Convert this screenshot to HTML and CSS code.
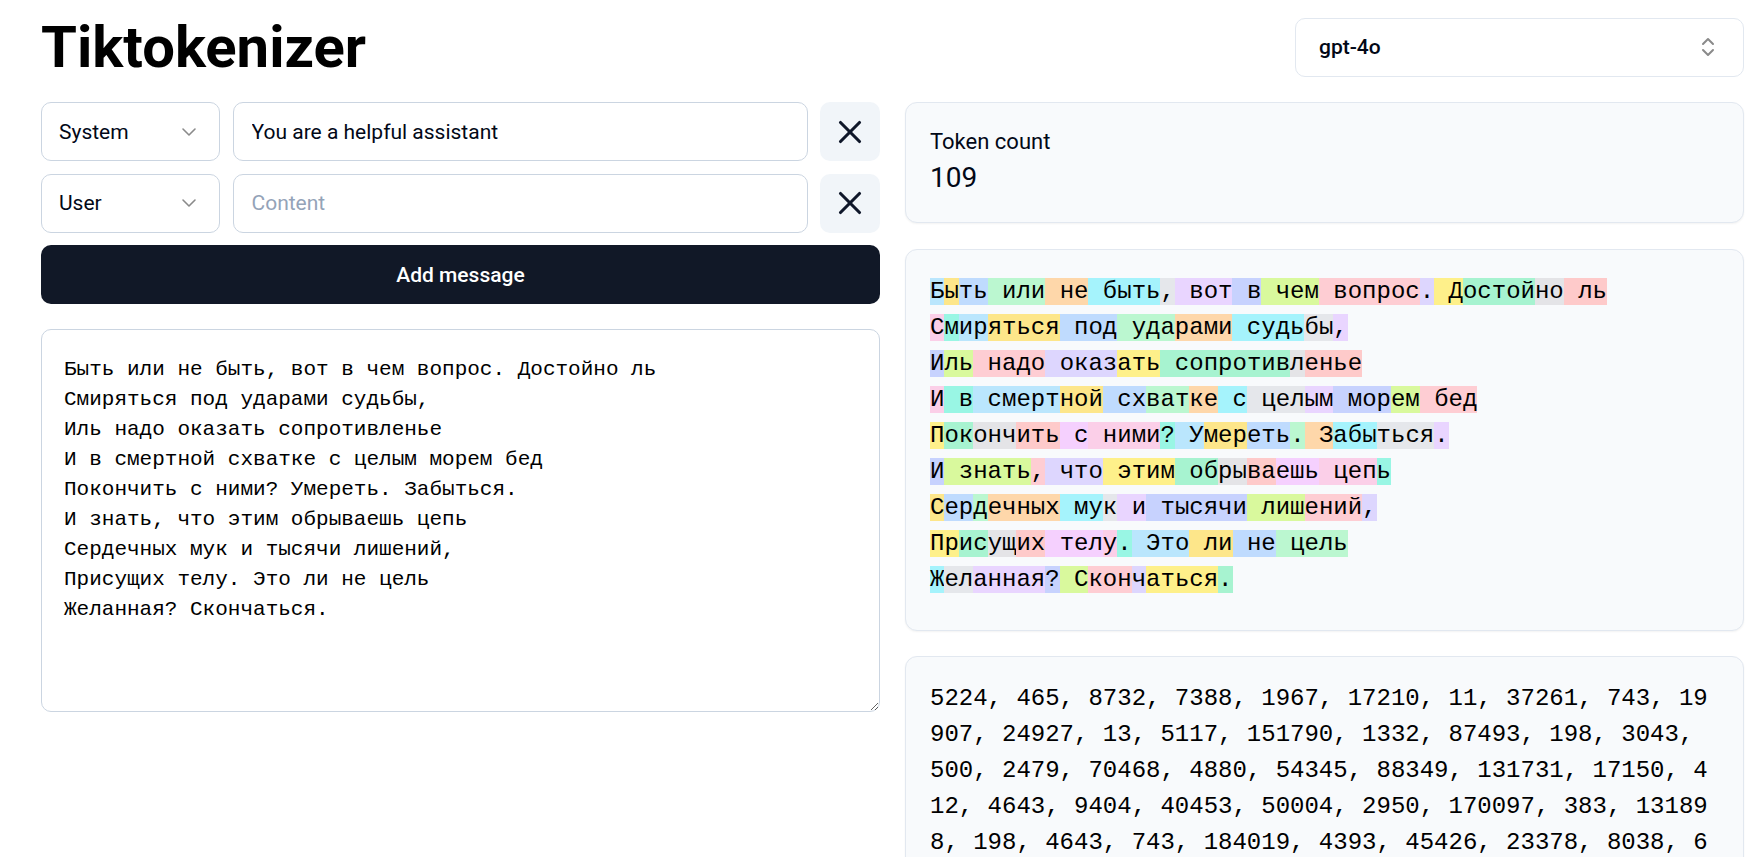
FILE: index.html
```html
<!DOCTYPE html>
<html lang="en">
<head>
<meta charset="utf-8">
<title>Tiktokenizer</title>
<link rel="stylesheet" href="styles.css">
</head>
<body>
<div class="page">
  <header class="header">
    <h1 class="title">Tiktokenizer</h1>
    <div class="model-select">
      <span>gpt-4o</span>
      <svg class="icon-updown" width="24" height="24" viewBox="0 0 24 24" fill="none" stroke="currentColor" stroke-width="2" stroke-linecap="round" stroke-linejoin="round"><path d="m7 15 5 5 5-5"/><path d="m7 9 5-5 5 5"/></svg>
    </div>
  </header>

  <main class="grid">
    <section class="left">
      <div class="msg-row">
        <div class="role"><span>System</span><svg class="icon-chevron" width="24" height="24" viewBox="0 0 24 24" fill="none" stroke="currentColor" stroke-width="1.6" stroke-linecap="round" stroke-linejoin="round"><path d="m6 9 6 6 6-6"/></svg></div>
        <input class="content-input" type="text" value="You are a helpful assistant" placeholder="Content">
        <button class="remove" type="button"><svg width="38" height="38" viewBox="0 0 24 24" fill="none" stroke="currentColor" stroke-width="2" stroke-linecap="round" stroke-linejoin="round"><path d="M18 6 6 18"/><path d="m6 6 12 12"/></svg></button>
      </div>
      <div class="msg-row">
        <div class="role"><span>User</span><svg class="icon-chevron" width="24" height="24" viewBox="0 0 24 24" fill="none" stroke="currentColor" stroke-width="1.6" stroke-linecap="round" stroke-linejoin="round"><path d="m6 9 6 6 6-6"/></svg></div>
        <input class="content-input" type="text" value="" placeholder="Content">
        <button class="remove" type="button"><svg width="38" height="38" viewBox="0 0 24 24" fill="none" stroke="currentColor" stroke-width="2" stroke-linecap="round" stroke-linejoin="round"><path d="M18 6 6 18"/><path d="m6 6 12 12"/></svg></button>
      </div>
      <button class="add" type="button">Add message</button>
      <textarea class="editor">Быть или не быть, вот в чем вопрос. Достойно ль
Смиряться под ударами судьбы,
Иль надо оказать сопротивленье
И в смертной схватке с целым морем бед
Покончить с ними? Умереть. Забыться.
И знать, что этим обрываешь цепь
Сердечных мук и тысячи лишений,
Присущих телу. Это ли не цель
Желанная? Скончаться.</textarea>
    </section>

    <section class="right">
      <div class="card count-card">
        <div class="count-label">Token count</div>
        <div class="count-value">109</div>
      </div>
      <div class="card tokens"><span class="c0">Б</span><span class="c1">ы</span><span class="c2">ть</span><span class="c3"> или</span><span class="c4"> не</span><span class="c5"> быть</span><span class="c6">,</span><span class="c7"> вот</span><span class="c8"> в</span><span class="c9"> чем</span><span class="c10"> вопрос</span><span class="c11">.</span><span class="c12"> Д</span><span class="c13">остой</span><span class="c14">но</span><span class="c15"> ль</span><span class="c16">
</span><span class="c17">С</span><span class="c18">м</span><span class="c0">ир</span><span class="c1">яться</span><span class="c2"> под</span><span class="c3"> уда</span><span class="c4">рами</span><span class="c5"> судь</span><span class="c6">бы</span><span class="c7">,
</span><span class="c8">И</span><span class="c9">ль</span><span class="c10"> надо</span><span class="c11"> оказ</span><span class="c12">ать</span><span class="c13"> сопротив</span><span class="c14">л</span><span class="c15">енье</span><span class="c16">
</span><span class="c17">И</span><span class="c18"> в</span><span class="c0"> смерт</span><span class="c1">ной</span><span class="c2"> сх</span><span class="c3">ват</span><span class="c4">ке</span><span class="c5"> с</span><span class="c6"> цел</span><span class="c7">ым</span><span class="c8"> мор</span><span class="c9">ем</span><span class="c10"> бед</span><span class="c11">
</span><span class="c12">П</span><span class="c13">ок</span><span class="c14">онч</span><span class="c15">ить</span><span class="c16"> с</span><span class="c17"> ними</span><span class="c18">?</span><span class="c0"> У</span><span class="c1">мер</span><span class="c2">еть</span><span class="c3">.</span><span class="c4"> З</span><span class="c5">абы</span><span class="c6">ться</span><span class="c7">.
</span><span class="c8">И</span><span class="c9"> знать</span><span class="c10">,</span><span class="c11"> что</span><span class="c12"> этим</span><span class="c13"> об</span><span class="c14">ры</span><span class="c15">ва</span><span class="c16">ешь</span><span class="c17"> цеп</span><span class="c18">ь</span><span class="c0">
</span><span class="c1">С</span><span class="c2">ер</span><span class="c3">д</span><span class="c4">ечных</span><span class="c5"> му</span><span class="c6">к</span><span class="c7"> и</span><span class="c8"> тысячи</span><span class="c9"> лиш</span><span class="c10">ений</span><span class="c11">,
</span><span class="c12">Пр</span><span class="c13">ис</span><span class="c14">ущ</span><span class="c15">их</span><span class="c16"> тел</span><span class="c17">у</span><span class="c18">.</span><span class="c0"> Это</span><span class="c1"> ли</span><span class="c2"> не</span><span class="c3"> цель</span><span class="c4">
</span><span class="c5">Ж</span><span class="c6">ел</span><span class="c7">анная</span><span class="c8">?</span><span class="c9"> С</span><span class="c10">кон</span><span class="c11">ч</span><span class="c12">аться</span><span class="c13">.</span></div>
      <div class="card ids">5224, 465, 8732, 7388, 1967, 17210, 11, 37261, 743, 19907, 24927, 13, 5117, 151790, 1332, 87493, 198, 3043, 500, 2479, 70468, 4880, 54345, 88349, 131731, 17150, 412, 4643, 9404, 40453, 50004, 2950, 170097, 383, 131898, 198, 4643, 743, 184019, 4393, 45426, 23378, 8038, 669, 64341, 3313, 115930, 2488, 112496, 198, 40418, 3690, 35154, 10118, 669, 65575, 30, 79154, 22144, 14131, 13, 22137, 34208, 20408, 558, 4643, 157911, 11, 1734, 21460, 5962, 19114, 5152, 32284, 187431, 1935, 198, 1690, 1023, 1573, 128283, 105467, 2147, 843, 200155, 139069, 11138, 412, 37009, 1498, 25359, 5345, 54226, 1415, 13, 101981, 3296, 1967, 108734, 198, 108386, 3035, 19591, 30, 1301, 26689, 1395, 15112, 13</div>
    </section>
  </main>
</div>
</body>
</html>
```

FILE: styles.css
```css
* {
  box-sizing: border-box;
}

html,
body {
  margin: 0;
}

body {
  font-family: Roboto, "Noto Sans", sans-serif;
  color: #020817;
  background: #ffffff;
}

.page {
  padding: 17px 11px 40px 41px;
}

.header {
  display: flex;
  justify-content: space-between;
  align-items: center;
  height: 60px;
  margin-bottom: 25px;
}

.title {
  margin: 0;
  font-size: 58px;
  font-weight: 700;
  line-height: 1;
  color: #000000;
}

.model-select {
  width: 449px;
  height: 59px;
  display: flex;
  align-items: center;
  justify-content: space-between;
  padding: 0 23px 0 23px;
  border: 1px solid #e2e8f0;
  border-radius: 10px;
  background: #ffffff;
  font-size: 21px;
  font-weight: 500;
}

.icon-updown,
.icon-chevron {
  color: #8a8a8a;
  flex: none;
}

.grid {
  display: grid;
  grid-template-columns: 1fr 1fr;
  column-gap: 25px;
  align-items: start;
}

.left {
  display: flex;
  flex-direction: column;
}

.msg-row {
  display: flex;
  gap: 12.5px;
  height: 59px;
  margin-bottom: 12.5px;
}

.role {
  width: 179px;
  flex: none;
  display: flex;
  align-items: center;
  justify-content: space-between;
  padding: 0 18px 0 17px;
  border: 1px solid #cbd5e1;
  border-radius: 10px;
  font-size: 21px;
}

.content-input {
  flex: 1;
  min-width: 0;
  padding: 0 18px;
  border: 1px solid #cbd5e1;
  border-radius: 10px;
  font-family: Roboto, "Noto Sans", sans-serif;
  font-size: 21px;
  color: #020817;
  background: #ffffff;
  outline: none;
}

.content-input::placeholder {
  color: #94a3b8;
}

.remove {
  width: 60px;
  flex: none;
  display: flex;
  align-items: center;
  justify-content: center;
  padding: 0;
  border: 0;
  border-radius: 10px;
  background: #f1f5f9;
  color: #0f172a;
}

.add {
  height: 59px;
  margin-bottom: 25px;
  border: 0;
  border-radius: 10px;
  background: #111827;
  color: #ffffff;
  font-family: Roboto, "Noto Sans", sans-serif;
  font-size: 21px;
  font-weight: 500;
}

.editor {
  height: 383px;
  width: 100%;
  padding: 25px 22px;
  border: 1px solid #cbd5e1;
  border-radius: 10px;
  font-family: "Liberation Mono", monospace;
  font-size: 21px;
  line-height: 30px;
  color: #000000;
  background: #ffffff;
  resize: vertical;
  outline: none;
}

.right {
  display: flex;
  flex-direction: column;
  gap: 25.5px;
}

.card {
  padding: 24px;
  border: 1px solid #e2e8f0;
  border-radius: 12px;
  background: #f8fafc;
  box-shadow: 0 1px 2px rgba(0, 0, 0, 0.05);
}

.count-label {
  font-size: 22px;
  line-height: 30px;
}

.count-value {
  font-size: 28px;
  line-height: 41px;
}

.tokens {
  min-height: 382px;
  font-family: "Liberation Mono", monospace;
  font-size: 24px;
  line-height: 36px;
  white-space: pre-wrap;
  color: #000000;
}

.ids {
  font-family: "Liberation Mono", monospace;
  font-size: 24px;
  line-height: 36px;
  word-break: break-all;
  color: #000000;
}

.c0 { background: #bae6fd; }
.c1 { background: #fde68a; }
.c2 { background: #bfdbfe; }
.c3 { background: #bbf7d0; }
.c4 { background: #fed7aa; }
.c5 { background: #a5f3fc; }
.c6 { background: #e5e7eb; }
.c7 { background: #e9d5ff; }
.c8 { background: #c7d2fe; }
.c9 { background: #d9f99d; }
.c10 { background: #fecdd3; }
.c11 { background: #ddd6fe; }
.c12 { background: #fef08a; }
.c13 { background: #a7f3d0; }
.c14 { background: #e4e4e7; }
.c15 { background: #fecaca; }
.c16 { background: #f5d0fe; }
.c17 { background: #fbcfe8; }
.c18 { background: #99f6e4; }
```
